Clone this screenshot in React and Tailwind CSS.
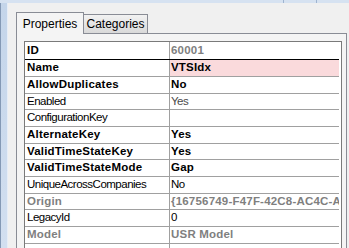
const rows = [
  { name: 'Name', value: 'VTSIdx', nb: true, vb: true, pink: true, h: 'h-[17px]' },
  { name: 'AllowDuplicates', value: 'No', nb: true, vb: true, h: 'h-[17px]' },
  { name: 'Enabled', value: 'Yes', vc: 'text-[#4a4a4a]', h: 'h-[16px]' },
  { name: 'ConfigurationKey', value: '', h: 'h-[17px]' },
  { name: 'AlternateKey', value: 'Yes', nb: true, vb: true, h: 'h-[17px]' },
  { name: 'ValidTimeStateKey', value: 'Yes', nb: true, vb: true, h: 'h-[16px]' },
  { name: 'ValidTimeStateMode', value: 'Gap', nb: true, vb: true, h: 'h-[17px]' },
  { name: 'UniqueAcrossCompanies', value: 'No', h: 'h-[17px]' },
  { name: 'Origin', value: '{16756749-F47F-42C8-AC4C-A', nb: true, vb: true, gray: true, h: 'h-[16px]' },
  { name: 'LegacyId', value: '0', h: 'h-[17px]' },
  { name: 'Model', value: 'USR Model', nb: true, vb: true, gray: true, h: 'h-[17px]' },
  { name: '', value: '', h: 'h-[16px]' },
]

function Row({ name, value, nb, vb, vc, pink, gray, h }) {
  const nameCls = nb
    ? 'font-bold tracking-[0.2px] ' + (gray ? 'text-[#7f7f7f]' : 'text-black')
    : 'tracking-[-0.5px] text-black'
  const valCls = vb
    ? 'font-bold tracking-[0.2px] ' + (gray ? 'text-[#7f7f7f]' : 'text-black')
    : 'tracking-[-0.5px] ' + (vc || 'text-black')
  return (
    <div className={`flex ${h} border-b border-[#a0a0a0]`}>
      <div className={`w-[145px] shrink-0 border-r border-[#a0a0a0] pl-[2px] flex items-center whitespace-nowrap overflow-hidden ${nameCls}`}>
        {name}
      </div>
      <div className={`flex-1 min-w-0 pl-[1px] flex items-center whitespace-nowrap overflow-hidden ${pink ? 'bg-[#fadadc]' : ''} ${valCls}`}>
        {value}
      </div>
    </div>
  )
}

export default function App() {
  return (
    <div className="w-[349px] h-[248px] overflow-hidden bg-[#f0f0f0] flex flex-col text-[11.5px] leading-none font-['Liberation_Sans',Arial,sans-serif]">
      {/* window frame top */}
      <div className="h-[3px] shrink-0 bg-[#d6e2f1] flex justify-end">
        <div className="w-[33px] border-l border-[#9fb4d0]" />
        <div className="w-[33px] border-l border-[#9fb4d0]" />
      </div>

      <div className="flex flex-1 min-h-0">
        {/* window frame left */}
        <div className="w-[8px] shrink-0 flex">
          <div className="w-px bg-[#8499b5]" />
          <div className="flex-1 bg-gradient-to-b from-[#c4d5ea] to-[#d2dff0]" />
          <div className="w-px bg-[#e6edf7]" />
        </div>

        <div className="flex-1 min-w-0 pl-[8px] pt-[9px] flex flex-col">
          {/* tabs */}
          <div className="flex items-end h-[21px] shrink-0 relative z-10">
            <div className="h-[22px] -mb-px w-[68px] border border-b-0 border-[#898c95] bg-[#f4f4f4] flex items-center justify-center text-[12px] text-black">
              Properties
            </div>
            <div className="h-[19px] w-[64px] border border-l-0 border-b-0 border-[#898c95] bg-gradient-to-b from-[#f2f2f2] to-[#d9d9d9] flex items-center justify-center text-[12px] text-black">
              Categories
            </div>
          </div>

          {/* tab page */}
          <div className="flex-1 min-h-0 mr-[2px] border border-b-0 border-[#898c95] bg-[#f4f4f4] pt-[7px] pl-[7px] pr-[4px] flex flex-col">
            <div className="flex-1 min-h-0 bg-white border-l border-r border-t border-[#7a7a7a] pr-[2px] overflow-hidden">
              <div className="flex h-[18px] border-b border-black">
                <div className="w-[145px] shrink-0 border-r border-[#a0a0a0] pl-[2px] flex items-center font-bold tracking-[0.2px] text-black">
                  ID
                </div>
                <div className="flex-1 pl-[1px] flex items-center font-bold tracking-[0.2px] text-[#7f7f7f]">
                  60001
                </div>
              </div>
              {rows.map((r, i) => (
                <Row key={i} {...r} />
              ))}
            </div>
          </div>
        </div>
      </div>
    </div>
  )
}
